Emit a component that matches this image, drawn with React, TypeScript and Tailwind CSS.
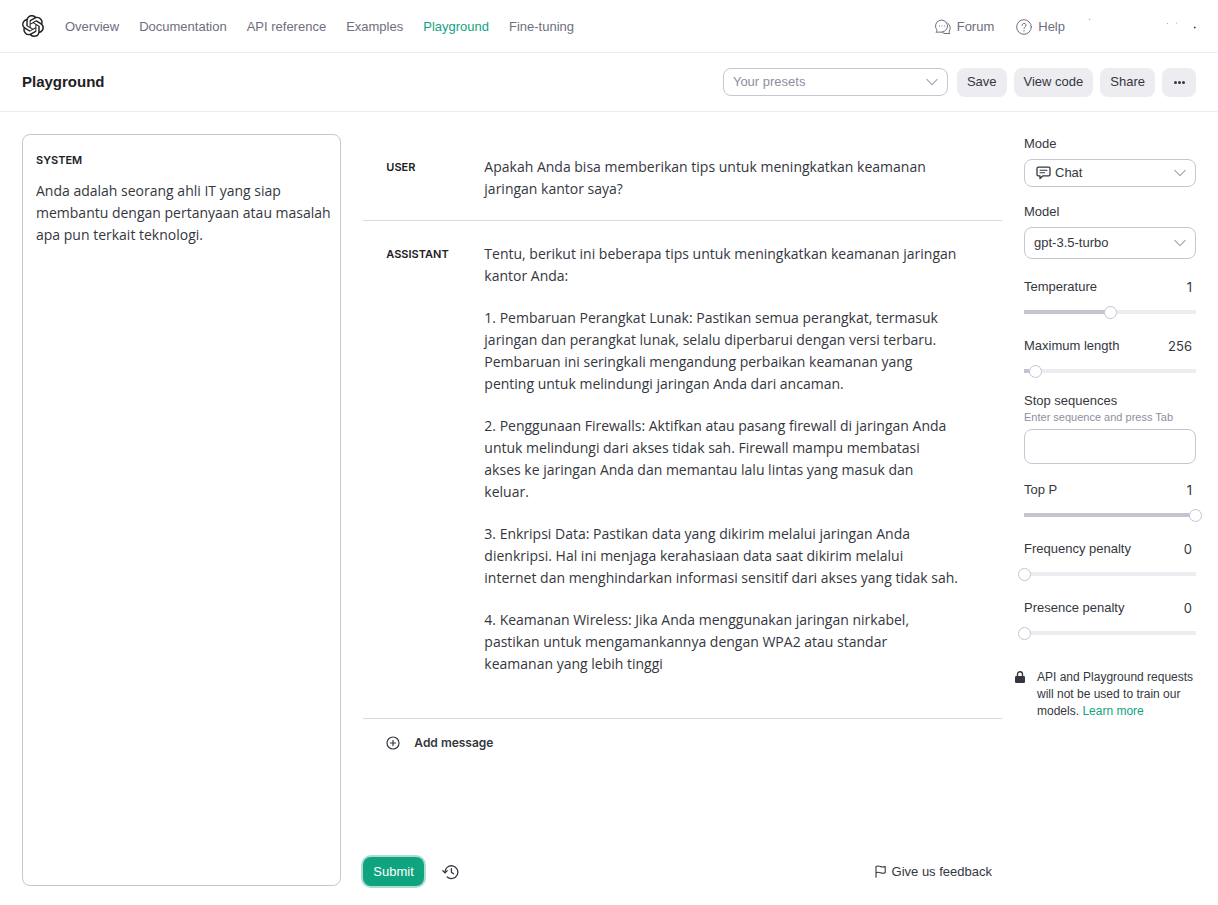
import { useId, useState, type ReactNode } from "react";
import { SiOpenai } from "react-icons/si";

const navLinks = ["Overview", "Documentation", "API reference", "Examples", "Playground", "Fine-tuning"];

const replyParagraphs = [
  "Tentu, berikut ini beberapa tips untuk meningkatkan keamanan jaringan kantor Anda:",
  "1. Pembaruan Perangkat Lunak: Pastikan semua perangkat, termasuk jaringan dan perangkat lunak, selalu diperbarui dengan versi terbaru. Pembaruan ini seringkali mengandung perbaikan keamanan yang penting untuk melindungi jaringan Anda dari ancaman.",
  "2. Penggunaan Firewalls: Aktifkan atau pasang firewall di jaringan Anda untuk melindungi dari akses tidak sah. Firewall mampu membatasi\nakses ke jaringan Anda dan memantau lalu lintas yang masuk dan\nkeluar.",
  "3. Enkripsi Data: Pastikan data yang dikirim melalui jaringan Anda dienkripsi. Hal ini menjaga kerahasiaan data saat dikirim melalui\ninternet dan menghindarkan informasi sensitif dari akses yang tidak sah.",
  "4. Keamanan Wireless: Jika Anda menggunakan jaringan nirkabel, pastikan untuk mengamankannya dengan WPA2 atau standar\nkeamanan yang lebih tinggi",
];

function ForumIcon() {
  return (
    <svg viewBox="0 0 16 16" className="size-4" fill="none" stroke="currentColor" strokeWidth="1" strokeLinecap="round" strokeLinejoin="round" aria-hidden="true">
      <path d="M1.200 12.900c.8-.7 1-1.300.5-2.200A6 6 0 1 1 7 13.100z" />
      <path d="M12.800 4.300A5.700 5.700 0 0 1 14.400 12c-.5.900-.3 1.500.5 2.500H10a6 6 0 0 1-3-1.200" />
      <path d="M4.400 7h.1M7 7h.1M9.600 7h.1" />
    </svg>
  );
}

function HelpIcon() {
  return (
    <svg viewBox="0 0 16 16" className="size-4" fill="none" stroke="currentColor" strokeWidth="1" strokeLinecap="round" aria-hidden="true">
      <circle cx="8" cy="8" r="7.3" />
      <path d="M6 6.400a2 2 0 1 1 2.900 1.700c-.6.400-.9.700-.9 1.400" />
      <path d="M8 11.600v.2" strokeWidth="1.300" />
    </svg>
  );
}

function ChatIcon() {
  return (
    <svg viewBox="0 0 15 14" className="h-3.5 w-[15px]" fill="none" stroke="currentColor" strokeWidth="1.300" strokeLinecap="round" strokeLinejoin="round" aria-hidden="true">
      <path d="M2.300 1.200h10.400a1.300 1.300 0 0 1 1.300 1.300v6a1.300 1.300 0 0 1-1.300 1.300H7L4 12.600V9.800H2.300A1.300 1.300 0 0 1 1 8.500v-6a1.300 1.300 0 0 1 1.300-1.300z" />
      <path d="M4 4.200h7M4 6.800h4.600" strokeWidth="1.100" />
    </svg>
  );
}

function ChevronIcon() {
  return (
    <svg viewBox="0 0 12 8" className="pointer-events-none absolute right-2.5 h-2 w-3" fill="none" stroke="#a3a3b3" strokeWidth="1.100" strokeLinecap="round" strokeLinejoin="round" aria-hidden="true">
      <path d="M.8 1.300 6 6.600l5.200-5.300" />
    </svg>
  );
}

function LockIcon() {
  return (
    <svg viewBox="0 0 10 12" className="mt-0.5 h-3 w-2.5 shrink-0" aria-hidden="true">
      <path d="M2.500 5.500V3.200a2.500 2.500 0 0 1 5 0v2.300" fill="none" stroke="currentColor" strokeWidth="1.400" />
      <rect x="0" y="5" width="10" height="7" rx="1.200" fill="currentColor" />
    </svg>
  );
}

function PlusCircleIcon() {
  return (
    <svg viewBox="0 0 14 14" className="size-3.5" fill="none" stroke="currentColor" strokeWidth="1.200" strokeLinecap="round" aria-hidden="true">
      <circle cx="7" cy="7" r="6" />
      <path d="M7 4.400v5.200M4.400 7h5.200" />
    </svg>
  );
}

function HistoryIcon() {
  return (
    <svg viewBox="0 0 17 16" className="h-4 w-[17px]" fill="none" stroke="currentColor" strokeWidth="1.300" strokeLinecap="round" strokeLinejoin="round" aria-hidden="true">
      <path d="M3 8.600A6.400 6.400 0 1 1 5.200 13" />
      <path d="M.9 6.800 3 8.900l2.100-2.100" />
      <path d="M9.400 4.600V8.200l2.200 1.500" />
    </svg>
  );
}

function FlagIcon() {
  return (
    <svg viewBox="0 0 11 13" className="h-[13px] w-[11px]" fill="none" stroke="currentColor" strokeWidth="1.100" strokeLinecap="round" strokeLinejoin="round" aria-hidden="true">
      <path d="M1 12.300V1.500c1.600-.8 3-.6 4.500 0s3 .8 4.700 0v6.300c-1.700.8-3.200.6-4.700 0S2.600 7 1 7.800" />
    </svg>
  );
}

function SelectBox({ id, label, options, className, icon }: { id: string; label?: string; options: string[]; className: string; icon?: ReactNode }) {
  return (
    <div className="relative flex items-center">
      {icon && <span className="pointer-events-none absolute left-3">{icon}</span>}
      <select id={id} aria-label={label} className={`w-full cursor-pointer appearance-none rounded-lg border border-[#c5c5d2] bg-white pr-8 ${className}`}>
        {options.map((option) => (
          <option key={option}>{option}</option>
        ))}
      </select>
      <ChevronIcon />
    </div>
  );
}

function SliderField({ label, initial, max, step }: { label: string; initial: number; max: number; step: number }) {
  const id = useId();
  const [value, setValue] = useState(initial);
  return (
    <div className="flex flex-col gap-[9px]">
      <div className="flex items-center justify-between pr-1">
        <label htmlFor={id}>{label}</label>
        <output htmlFor={id} className="font-['Inter',sans-serif]">
          {value}
        </output>
      </div>
      <div className="grid h-4 items-center">
        <div className="h-1 bg-[#ececf1] [grid-area:1/1]">
          <div className="h-full bg-[#c5c5d2]" style={{ width: `${(value / max) * 100}%` }} />
        </div>
        <input
          id={id}
          type="range"
          min={0}
          max={max}
          step={step}
          value={value}
          onChange={(event) => setValue(Number(event.target.value))}
          className="-mx-1.5 h-4 w-[calc(100%+12px)] cursor-pointer appearance-none bg-transparent [grid-area:1/1] [&::-webkit-slider-thumb]:size-[13px] [&::-webkit-slider-thumb]:appearance-none [&::-webkit-slider-thumb]:rounded-full [&::-webkit-slider-thumb]:border [&::-webkit-slider-thumb]:border-[#c5c5d2] [&::-webkit-slider-thumb]:bg-white"
        />
      </div>
    </div>
  );
}

function Message({ role, children }: { role: string; children: ReactNode }) {
  return (
    <article className="flex border-b border-[#d9d9e3] pt-[22px] pl-[23px]">
      <h2 className="w-[98px] shrink-0 font-['Inter',sans-serif] text-[11px] leading-[22px] font-semibold text-[#202123]">{role}</h2>
      <div className="flex min-w-0 flex-1 flex-col gap-5 pr-10 font-['Open_Sans',sans-serif] text-sm leading-[22px] whitespace-pre-line">{children}</div>
    </article>
  );
}

export default function App() {
  return (
    <div className="flex min-h-screen flex-col bg-white font-['Liberation_Sans',sans-serif] text-[13px] leading-4 text-[#353740]">
      <header className="flex h-[53px] items-center border-b border-[#ececf1] px-[22px] text-[#6e6e80]">
        <a href="#home" aria-label="Home" className="mr-[21px] text-[#202123]">
          <SiOpenai className="size-[22px]" />
        </a>
        <nav className="flex gap-5 pt-0.5">
          {navLinks.map((link) => (
            <a key={link} href={`#${link}`} className={link === "Playground" ? "text-[#10a37f]" : ""}>
              {link}
            </a>
          ))}
        </nav>
        <div className="ml-auto flex items-center gap-[22px] pt-0.5">
          <a href="#forum" className="flex items-center gap-[6px]">
            <ForumIcon />
            Forum
          </a>
          <a href="#help" className="flex items-center gap-[6px]">
            <HelpIcon />
            Help
          </a>
          <svg viewBox="0 0 109 20" className="h-5 w-[109px]" stroke="currentColor" strokeWidth="0.600" aria-hidden="true">
            <path d="M2 3l1-1.500M80 6.500h1M89 6.500l1-.8" />
            <path d="M107 10.500h1.500" stroke="#202123" strokeWidth="1.500" />
          </svg>
        </div>
      </header>

      <div className="flex h-[59px] items-center gap-[7px] border-b border-[#ececf1] px-[22px] text-[#353740]">
        <h1 className="mr-auto text-[15px] font-bold text-[#202123]">Playground</h1>
        <div className="mr-0.5 w-[225px]">
          <SelectBox id="presets" label="Your presets" options={["Your presets"]} className="h-7 pl-[9px] text-[#8e8ea0]" />
        </div>
        {["Save", "View code", "Share"].map((label) => (
          <button key={label} type="button" className="h-[29px] rounded-lg bg-[#ececf1] px-[10px]">
            {label}
          </button>
        ))}
        <button type="button" aria-label="More" className="flex h-[29px] w-[34px] items-center justify-center gap-px rounded-lg bg-[#ececf1]">
          <span className="size-[3px] rounded-full bg-[#353740]" />
          <span className="size-[3px] rounded-full bg-[#353740]" />
          <span className="size-[3px] rounded-full bg-[#353740]" />
        </button>
      </div>

      <main className="grid flex-1 grid-cols-[minmax(0,1fr)_minmax(0,2fr)_172px] gap-[22px] px-[22px] pt-[22px] pb-[19px]">
        <section className="flex flex-col rounded-lg border border-[#c5c5d2] pt-[17px] pr-1 pb-3 pl-[13px]">
          <label htmlFor="system" className="font-['Inter',sans-serif] text-[11px] font-semibold text-[#202123]">
            SYSTEM
          </label>
          <textarea
            id="system"
            className="mt-3 w-full flex-1 resize-none font-['Open_Sans',sans-serif] text-sm leading-[22px] outline-none"
            defaultValue="Anda adalah seorang ahli IT yang siap membantu dengan pertanyaan atau masalah apa pun terkait teknologi."
          />
        </section>

        <section className="flex flex-col">
          <Message role="USER">
            <p className="pb-5">Apakah Anda bisa memberikan tips untuk meningkatkan keamanan jaringan kantor saya?</p>
          </Message>
          <Message role="ASSISTANT">
            {replyParagraphs.map((paragraph) => (
              <p key={paragraph} className="last:pb-[43px]">
                {paragraph}
              </p>
            ))}
          </Message>
          <button type="button" className="flex items-center gap-[14px] px-[23px] py-4 font-['Inter',sans-serif] text-xs leading-4 font-semibold">
            <PlusCircleIcon />
            Add message
          </button>
          <footer className="mt-auto flex items-center">
            <button type="button" className="h-[29px] rounded-lg bg-[#10a37f] px-[10px] text-white ring-2 ring-[#a9dfd1]">
              Submit
            </button>
            <button type="button" aria-label="History" className="ml-[18px]">
              <HistoryIcon />
            </button>
            <a href="#feedback" className="mr-2.5 ml-auto flex items-center gap-[6px]">
              <FlagIcon />
              Give us feedback
            </a>
          </footer>
        </section>

        <aside className="flex flex-col">
          <label htmlFor="mode" className="mt-0.5 mb-[7px]">
            Mode
          </label>
          <SelectBox id="mode" options={["Chat"]} className="h-7 pl-[30px]" icon={<ChatIcon />} />
          <label htmlFor="model" className="mt-[17px] mb-[7px]">
            Model
          </label>
          <SelectBox id="model" options={["gpt-3.5-turbo"]} className="h-8 pl-[9px]" />
          <div className="mt-5 flex flex-col gap-[18px]">
            <SliderField label="Temperature" initial={1} max={2} step={0.01} />
            <SliderField label="Maximum length" initial={256} max={4096} step={1} />
            <div className="-mt-1 flex flex-col">
              <label htmlFor="stop">Stop sequences</label>
              <span id="stop-hint" className="text-[11px] text-[#8e8ea0]">
                Enter sequence and press Tab
              </span>
              <input id="stop" type="text" aria-describedby="stop-hint" className="mt-1 h-[35px] w-full rounded-lg border border-[#c5c5d2] px-2" />
            </div>
            <SliderField label="Top P" initial={1} max={1} step={0.01} />
            <SliderField label="Frequency penalty" initial={0} max={2} step={0.01} />
            <SliderField label="Presence penalty" initial={0} max={2} step={0.01} />
          </div>
          <div className="mt-7 -ml-[9px] flex gap-3">
            <LockIcon />
            <p className="text-xs leading-[17px]">
              API and Playground requests will not be used to train our models.{" "}
              <a href="#learn" className="text-[#10a37f]">
                Learn more
              </a>
            </p>
          </div>
        </aside>
      </main>
    </div>
  );
}
